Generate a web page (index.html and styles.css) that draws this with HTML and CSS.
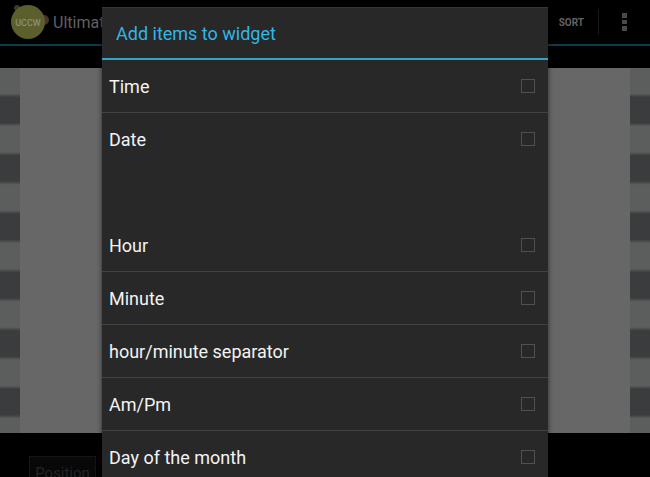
FILE: index.html
```html
<!DOCTYPE html>
<html lang="en">

<head>
    <meta charset="UTF-8">
    <meta name="viewport" content="width=device-width, initial-scale=1.0">
    <title>Widget editor</title>
    <link rel="stylesheet" href="styles.css">
</head>

<body>
    <!-- Editor behind the dialog -->
    <div class="app">
        <header class="action-bar">
            <svg class="logo" viewBox="0 0 40 36" width="40" height="36" aria-hidden="true">
                <circle cx="7" cy="4" r="3" fill="#3f3822" />
                <circle cx="34" cy="16" r="5" fill="#4b332d" />
                <circle cx="18" cy="18" r="17" fill="#5b5f2c" />
                <text class="logo-text" x="18" y="22" text-anchor="middle">UCCW</text>
            </svg>
            <span class="app-title">Ultimat</span>
            <button class="sort" type="button">SORT</button>
            <button class="overflow" type="button" aria-label="More options">
                <svg viewBox="0 0 5 18" width="5" height="18">
                    <path d="M0 0h5v5H0zM0 7h5v4H0zM0 13h5v5H0z" fill="#4a4a4a" />
                </svg>
            </button>
        </header>
        <main class="stage">
            <div class="canvas"></div>
        </main>
        <footer class="bottom-bar">
            <button class="position" type="button">Position</button>
        </footer>
    </div>

    <!-- Item picker -->
    <div class="dialog" role="dialog" aria-labelledby="dialog-title">
        <h1 class="dialog-title" id="dialog-title">Add items to widget</h1>
        <ul class="items">
            <li class="item"><label for="time">Time</label><input type="checkbox" id="time"></li>
            <li class="item last"><label for="date">Date</label><input type="checkbox" id="date"></li>
            <li class="item last"></li>
            <li class="item"><label for="hour">Hour</label><input type="checkbox" id="hour"></li>
            <li class="item"><label for="minute">Minute</label><input type="checkbox" id="minute"></li>
            <li class="item"><label for="separator">hour/minute separator</label><input type="checkbox" id="separator"></li>
            <li class="item"><label for="ampm">Am/Pm</label><input type="checkbox" id="ampm"></li>
            <li class="item"><label for="day">Day of the month</label><input type="checkbox" id="day"></li>
        </ul>
    </div>
</body>

</html>
```

FILE: styles.css
```css
* {
    box-sizing: border-box;
}

body {
    margin: 0;
    height: 100vh;
    overflow: hidden;
    background-color: #000;
    font-family: Roboto, "Liberation Sans", sans-serif;
}

button {
    border: 0;
    padding: 0;
    background: none;
    font-family: inherit;
}

.app {
    display: flex;
    flex-direction: column;
    height: 100%;
}

.action-bar {
    display: flex;
    align-items: center;
    height: 46px;
    padding-left: 10px;
    border-bottom: 2px solid #0d3c4d;
}

.logo {
    flex: none;
}

.logo-text {
    font-size: 9px;
    font-weight: 500;
    fill: #8b8d80;
}

.app-title {
    flex: 1;
    padding-left: 3px;
    font-size: 16px;
    color: #616161;
}

.sort {
    height: 26px;
    padding: 0 14px;
    border-right: 1px solid #181818;
    font-size: 10px;
    font-weight: 700;
    color: #626262;
}

.overflow {
    display: flex;
    justify-content: center;
    width: 51px;
}

/* Striped wallpaper with the widget canvas on top */
.stage {
    flex: 1;
    margin-top: 22px;
    padding: 0 20px;
    background: repeating-linear-gradient(#5b5e5d 0, #5b5e5d 7%, #3b3c3e 8%, #3b3c3e 15%, #5b5e5d 16%);
}

.canvas {
    height: 100%;
    background-color: #676767;
}

.bottom-bar {
    display: flex;
    height: 44px;
    padding: 23px 29px 0;
}

.position {
    flex: none;
    width: 67px;
    height: 34px;
    border: 1px solid #151515;
    background-color: #080808;
    font-size: 15px;
    line-height: 32px;
    color: #242424;
}

.dialog {
    position: absolute;
    top: 7px;
    right: 102px;
    bottom: 0;
    left: 102px;
    overflow: hidden;
    background-color: #282828;
    border-top: 1px solid #363636;
    box-shadow: 0 0 5px rgba(0, 0, 0, 0.6);
}

.dialog-title {
    margin: 0;
    padding: 2px 0 0 14px;
    border-bottom: 2px solid #33a4c8;
    font-size: 18px;
    font-weight: 400;
    line-height: 48px;
    color: #33b5e5;
}

.items {
    margin: 0;
    padding: 0;
    list-style: none;
}

.item {
    display: flex;
    align-items: center;
    justify-content: space-between;
    height: 53px;
    padding: 0 13px 0 7px;
    border-bottom: 1px solid #424242;
    font-size: 18px;
    color: #f3f3f3;
}

.item.last {
    border-bottom-color: transparent;
}

.item input {
    appearance: none;
    width: 14px;
    height: 14px;
    margin: 0;
    border: 1px solid #505050;
}
```
